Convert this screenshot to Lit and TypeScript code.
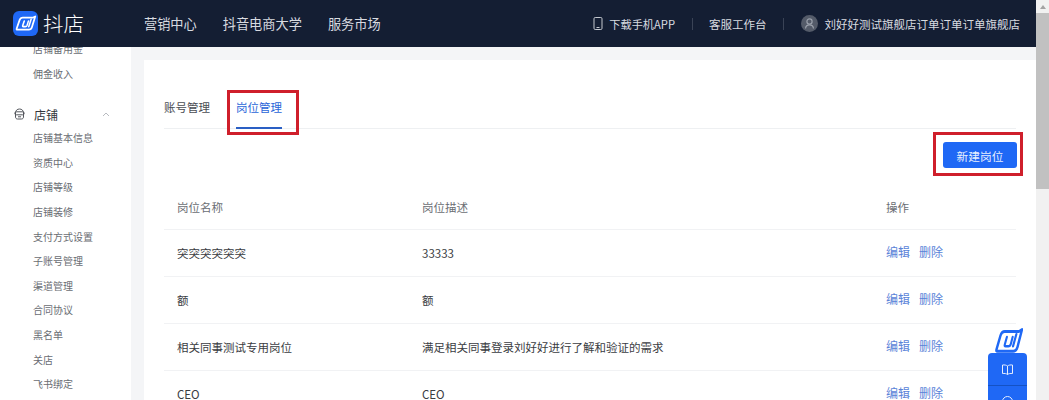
import { LitElement, html, css, svg } from "lit";
import { customElement } from "lit/decorators.js";

const rows = [
  ["突突突突突突", "33333"],
  ["额", "额"],
  ["相关同事测试专用岗位", "满足相关同事登录刘好好进行了解和验证的需求"],
  ["CEO", "CEO"],
];
const side = ["店铺基本信息", "资质中心", "店铺等级", "店铺装修", "支付方式设置", "子账号管理", "渠道管理", "合同协议", "黑名单", "关店", "飞书绑定"];

const mark = svg`<g transform="translate(2.200 0) skewX(-10)"><path d="M8.600 6.600H19L21 5.400 19.600 16.200Q19.300 18.600 17 18.600H5.600Q4.400 18.600 4.600 17.400L6 9Q6.400 6.600 8.600 6.600Z" fill="none" stroke="currentColor" stroke-width="1.800" stroke-linejoin="round"/><path d="M10.800 10L10.100 14.400Q9.900 15.600 11 15.600H13Q14.200 15.600 14.400 14.400L15 10M17.400 8.200L16.300 15.600" fill="none" stroke="currentColor" stroke-width="1.600" stroke-linecap="round"/></g>`;

@customElement("app-root")
export class AppRoot extends LitElement {
  static styles = css`
    :host { display: block; width: 1049px; height: 400px; overflow: hidden; position: relative; background: #f4f5f7;
      font-family: "Noto Sans CJK SC", "Noto Sans", sans-serif; color: #3a3c42; }
    .page { width: 1036px; height: 400px; display: flex; flex-direction: column; overflow: hidden; }
    header { flex: none; height: 47px; background: #141e33; color: #d8dbe0; display: flex; align-items: center; position: relative; z-index: 2; }
    .logo { display: flex; align-items: center; width: 144px; padding-left: 13px; box-sizing: border-box; gap: 5px; flex: none; }
    .logo-mark { width: 25px; height: 25px; border-radius: 6px; background: #1f68f5; color: #fff; display: block; }
    .brand { color: #fff; font-size: 20.500px; line-height: 25px; font-weight: 300; }
    .nav { display: flex; gap: 26px; font-size: 13.200px; }
    .right { margin-left: auto; display: flex; align-items: center; font-size: 11.500px; padding-right: 16px; }
    .dl { display: flex; align-items: center; gap: 6px; font-size: 11.200px; }
    .sep { width: 1px; height: 12px; background: #3a4356; margin: 0 16.500px; }
    .avatar { width: 17px; height: 17px; border-radius: 50%; background: #545b69; margin-right: 7px; color: #9aa0ab; display: block; }
    .body { flex: 1; display: flex; min-height: 0; }
    aside { width: 131px; flex: none; background: #fff; font-size: 10px; color: #6a6d73; box-sizing: border-box; padding-left: 33px; margin-top: -10px; }
    .sub { height: 24.600px; line-height: 24.600px; white-space: nowrap; }
    .group { display: flex; align-items: center; height: 24px; margin: 16px 0 0 -19px; font-size: 12px; color: #33363c; }
    .group .shop { width: 11px; height: 12px; margin-right: 9px; color: #55585e; }
    .group .chev { width: 8px; height: 5px; margin-left: 44px; color: #b8bbc0; }
    main { flex: 1; background: #f4f5f7; padding: 13px 0 0 13px; min-width: 0; }
    .card { background: #fff; height: 100%; padding: 0 20px; box-sizing: border-box; }
    .tabs { display: flex; gap: 26px; height: 69px; border-bottom: 1px solid #eef0f2; font-size: 11.500px; box-sizing: border-box; color: #4a4d53; }
    .tab { padding-top: 37px; line-height: 20px; box-sizing: border-box; height: 69px; flex: none; }
    .tab.active { color: #2a66d9; border-bottom: 2px solid #2a5fc4; }
    .bar { display: flex; justify-content: flex-end; padding-top: 13px; height: 57px; }
    button { width: 74px; height: 26px; border: 0; border-radius: 3px; background: #1f68f5; color: #e8f0ff; font: inherit; font-size: 11.700px; padding: 0; margin-right: -1px; }
    .row { display: grid; grid-template-columns: 245px 464px 1fr; padding-left: 13px; height: 47px; align-items: center; border-bottom: 1px solid #f1f2f4; box-sizing: border-box; font-size: 11.500px; color: #3a3c42; }
    .row.head { align-items: start; line-height: 16px; height: 31px; color: #6a6d73; }
    .ops { display: flex; gap: 9px; color: #5a83d8; font-size: 12px; margin-top: -4px; }
    .mark { position: absolute; border: 3px solid #cf1f2b; box-sizing: border-box; pointer-events: none; z-index: 3; }
    .m-tab { left: 227px; top: 90px; width: 72px; height: 45px; }
    .m-btn { left: 933px; top: 132px; width: 90px; height: 44px; }
    .float { position: absolute; left: 988px; top: 328px; width: 39px; z-index: 3; display: flex; flex-direction: column; align-items: center; }
    .float-mark { width: 28px; height: 25px; color: #1f68f5; display: block; margin-left: 3px; }
    .float-panel { width: 39px; height: 47px; background: #1f68f5; border-radius: 4px 4px 0 0; color: #e6eeff; }
    .float-cell { height: 33px; border-bottom: 1px solid #1552c4; display: flex; align-items: center; justify-content: center; box-sizing: border-box; }
    .float-cell svg { width: 13px; height: 13px; display: block; }
    .float-next { display: flex; justify-content: center; padding-top: 9px; }
    .float-next svg { width: 13px; height: 13px; display: block; }
    .scroll { position: absolute; right: 0; top: 0; width: 13px; height: 400px; background: #f1f1f1; display: flex; flex-direction: column; align-items: center; }
    .scroll .up { width: 0; height: 0; border-left: 3px solid transparent; border-right: 3px solid transparent; border-bottom: 4px solid #a3a3a3; margin-top: 5px; }
    .scroll .thumb { width: 13px; height: 176px; margin-top: 4px; background: #c1c1c1; }
  `;

  render() {
    return html`
      <div class="page">
        <header>
          <div class="logo">
            <svg class="logo-mark" viewBox="0 0 25 25">${mark}</svg>
            <span class="brand">抖店</span>
          </div>
          <div class="nav"><span>营销中心</span><span>抖音电商大学</span><span>服务市场</span></div>
          <div class="right">
            <span class="dl">
              <svg width="10" height="13" viewBox="0 0 10 13" fill="none" stroke="#c4c8cf" stroke-width="1"><rect x="1" y=".5" width="8" height="12" rx="1.200"/><path d="M3.500 10.500h3"/></svg>
              下载手机APP
            </span>
            <i class="sep"></i>
            <span>客服工作台</span>
            <i class="sep"></i>
            <svg class="avatar" viewBox="0 0 17 17" fill="none" stroke="currentColor" stroke-width="1.200"><circle cx="8.500" cy="6.500" r="2.600"/><path d="M4.500 13.500c.3-2.400 2-3.600 4-3.600s3.700 1.200 4 3.600"/></svg>
            <span>刘好好测试旗舰店订单订单订单旗舰店</span>
          </div>
        </header>
        <div class="body">
          <aside>
            <div class="sub">店铺备用金</div>
            <div class="sub">佣金收入</div>
            <div class="group">
              <svg class="shop" viewBox="0 0 11 12" fill="none" stroke="currentColor" stroke-width="1"><path d="M1.500 5C1.500 2.500 3.200 1 5.500 1S9.500 2.500 9.500 5V9C9.500 10.200 8.700 11 7.500 11H3.500C2.300 11 1.500 10.200 1.500 9Z"/><rect x=".8" y="3.800" width="9.400" height="3" rx="1.500"/><path d="M4 8.800h3"/></svg>
              店铺
              <svg class="chev" viewBox="0 0 8 5" fill="none" stroke="currentColor" stroke-width="1"><path d="M1 4l3-3 3 3"/></svg>
            </div>
            ${side.map((s) => html`<div class="sub">${s}</div>`)}
          </aside>
          <main>
            <div class="card">
              <div class="tabs">
                <div class="tab">账号管理</div>
                <div class="tab active">岗位管理</div>
              </div>
              <div class="bar"><button>新建岗位</button></div>
              <div class="row head"><span>岗位名称</span><span>岗位描述</span><span>操作</span></div>
              ${rows.map(
                (r) => html`<div class="row"><span>${r[0]}</span><span>${r[1]}</span><span class="ops"><span>编辑</span><span>删除</span></span></div>`
              )}
            </div>
          </main>
        </div>
      </div>
      <div class="mark m-tab"></div>
      <div class="mark m-btn"></div>
      <div class="float">
        <svg class="float-mark" viewBox="2.600 4.400 20.400 15.300" preserveAspectRatio="none">${mark}</svg>
        <div class="float-panel">
          <div class="float-cell">
            <svg viewBox="0 0 13 13" fill="none" stroke="currentColor" stroke-width="1"><path d="M6.500 3C5.300 2 3.500 1.800 1.500 2v8.500c2-.2 3.800 0 5 1 1.200-1 3-1.200 5-1V2c-2-.2-3.800 0-5 1zM6.500 3v8.500"/></svg>
          </div>
          <div class="float-next">
            <svg viewBox="0 0 13 13" fill="none" stroke="currentColor" stroke-width="1"><circle cx="6.500" cy="6.500" r="5"/></svg>
          </div>
        </div>
      </div>
      <div class="scroll"><i class="up"></i><div class="thumb"></div></div>
    `;
  }
}
